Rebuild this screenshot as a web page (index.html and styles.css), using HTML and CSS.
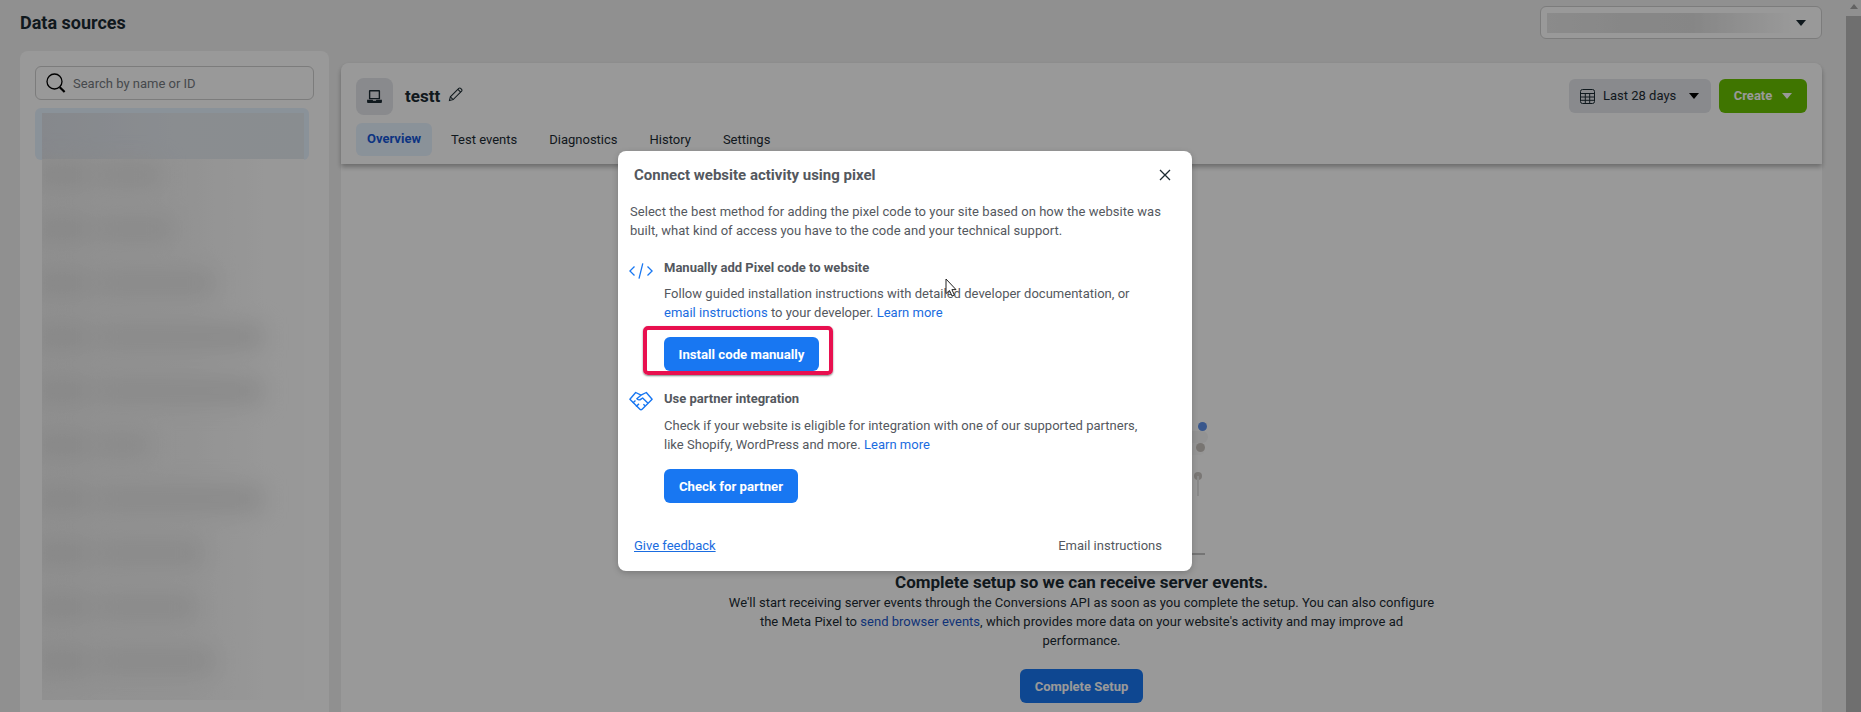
FILE: index.html
```html
<!DOCTYPE html>
<html lang="en">
<head>
<meta charset="utf-8">
<title>Data sources</title>
<link rel="stylesheet" href="styles.css">
</head>
<body>
<div class="app">
  <div class="content">
    <header class="topbar">
      <h1 class="page-title">Data sources</h1>
      <div class="account-select">
        <span class="account-redact"></span>
        <span class="caret caret-dark"></span>
      </div>
    </header>
    <div class="columns">
      <aside class="side-panel">
        <label class="search">
          <svg class="search-icon" viewBox="0 0 20 20" fill="none" stroke="#000" stroke-width="1.300"><circle cx="8.500" cy="8.500" r="7.500"/><path d="M13.800 14.200l4.800 4.800" stroke-width="2.200"/></svg>
          <span class="search-placeholder">Search by name or ID</span>
        </label>
        <div class="selected-item"></div>
        <div class="redact">
          <div class="redact-bars">
            <div class="redact-row r1"><i></i><b></b></div>
            <div class="redact-row r2"><i></i><b></b></div>
            <div class="redact-row r3"><i></i><b></b></div>
            <div class="redact-row r4"><i></i><b></b></div>
            <div class="redact-row r5"><i></i><b></b></div>
            <div class="redact-row r6"><i></i><b></b></div>
            <div class="redact-row r7"><i></i><b></b></div>
            <div class="redact-row r8"><i></i><b></b></div>
            <div class="redact-row r9"><i></i><b></b></div>
            <div class="redact-row r10"><i></i><b></b></div>
          </div>
        </div>
      </aside>
      <main class="main-panel">
        <section class="source-header">
          <div class="source-top">
            <div class="source-id">
              <span class="source-icon">
                <svg viewBox="0 0 16 14" width="15" height="13"><path fill="#1c2b33" fill-rule="evenodd" d="M3 0h10a1 1 0 0 1 1 1v9H2V1a1 1 0 0 1 1-1zm.5 1.500v7h9v-7z"/><path fill="#1c2b33" d="M0 10.500h6l.5 1h3l.5-1h6V13a1 1 0 0 1-1 1H1a1 1 0 0 1-1-1z"/></svg>
              </span>
              <span class="source-name">testt</span>
              <svg class="pencil" viewBox="0 0 16 16" fill="none" stroke="#1c2b33" stroke-width="1.100"><path d="M1.500 14.500l1-4L11.500 1.500a1.400 1.400 0 0 1 2 0l1 1a1.400 1.400 0 0 1 0 2l-9 9z"/><path d="M2.500 10.500l3 3M10.500 2.500l3 3"/></svg>
            </div>
            <div class="source-actions">
              <button class="btn-date">
                <svg class="calendar" viewBox="0 0 15 15" fill="none" stroke="#1c2b33" stroke-width="1"><rect x=".5" y=".5" width="14" height="14" rx="2"/><path d="M.5 4.500h14M.5 8h14M.5 11.300h14M5.300 4.500v10M9.700 4.500v10"/></svg>
                <span class="date-label">Last 28 days</span>
                <span class="caret caret-black"></span>
              </button>
              <button class="btn-create">Create<span class="caret caret-white"></span></button>
            </div>
          </div>
          <nav class="tabs">
            <a class="tab tab-active">Overview</a>
            <a class="tab">Test events</a>
            <a class="tab">Diagnostics</a>
            <a class="tab">History</a>
            <a class="tab">Settings</a>
          </nav>
        </section>
        <section class="setup">
          <div class="illustration">
            <span class="ill-track t1"></span>
            <span class="ill-track t2"></span>
            <span class="ill-dot d1"></span>
            <span class="ill-dot d2"></span>
            <span class="ill-dot d3"></span>
            <span class="ill-stem"></span>
            <span class="ill-base"></span>
          </div>
          <h2 class="setup-title">Complete setup so we can receive server events.</h2>
          <p class="setup-text">We'll start receiving server events through the Conversions API as soon as you complete the setup. You can also configure the Meta Pixel to <a class="setup-link">send browser events</a>, which provides more data on your website's activity and may improve ad performance.</p>
          <button class="btn-setup">Complete Setup</button>
        </section>
      </main>
    </div>
  </div>
  <div class="scrollbar">
    <span class="scroll-arrow"></span>
    <span class="scroll-thumb"></span>
  </div>
</div>

<div class="overlay"></div>

<div class="modal">
  <div class="modal-head">
    <h3 class="modal-title">Connect website activity using pixel</h3>
    <svg class="close" viewBox="0 0 12 12" fill="none" stroke="#1c2b33" stroke-width="1.300"><path d="M1 1l10 10M11 1L1 11"/></svg>
  </div>
  <div class="modal-body">
    <p class="intro">Select the best method for adding the pixel code to your site based on how the website was built, what kind of access you have to the code and your technical support.</p>
    <div class="option option-code">
      <svg class="option-icon" viewBox="0 0 24 16" fill="none" stroke="#1877f2" stroke-width="1.300"><path d="M5.500 3.500L.9 8l4.600 4.500M18.500 3.500L23.100 8l-4.600 4.500M13.800.4L10 15.600"/></svg>
      <div class="option-main">
        <h4 class="option-title">Manually add Pixel code to website</h4>
        <p class="option-text">Follow guided installation instructions with detailed developer documentation, or <a class="link">email instructions</a> to your developer. <a class="link">Learn more</a></p>
        <div class="highlight-wrap">
          <button class="btn-primary btn-install">Install code manually</button>
          <span class="highlight"></span>
        </div>
      </div>
    </div>
    <div class="option option-partner">
      <svg class="option-icon icon-hand" viewBox="0 0 24 20" fill="none" stroke="#1877f2" stroke-width="1.400" stroke-linejoin="round"><path d="M.9 8.300L6.700 1.500l5.300 2.700 5.300-2.700 5.800 6.800-10 10a1.500 1.500 0 0 1-2.200 0z"/><path d="M12 4.200L7.800 7.700c1 1.500 2.900 1.500 4.200.4l1.600-1.100 5.200 5.100M3.800 12l2.700-2.500M7 15.500l3-2.600M16 14.700l-1.600-1.500"/></svg>
      <div class="option-main">
        <h4 class="option-title">Use partner integration</h4>
        <p class="option-text">Check if your website is eligible for integration with one of our supported partners, like Shopify, WordPress and more. <a class="link">Learn more</a></p>
        <button class="btn-primary btn-partner">Check for partner</button>
      </div>
    </div>
  </div>
  <div class="modal-foot">
    <a class="feedback">Give feedback</a>
    <a class="email">Email instructions</a>
  </div>
</div>

<svg class="cursor" viewBox="0 0 13 19"><path d="M1 1v14.500l3.500-3 2.500 5.500 2.400-1-2.500-5.400H11z" fill="#fff" stroke="#222" stroke-width="1"/></svg>
</body>
</html>
```

FILE: styles.css
```css
* { box-sizing: border-box; }
html, body { margin: 0; height: 712px; overflow: hidden; }
body { font-family: Roboto, "Liberation Sans", sans-serif; background: #f1f1f1; color: #1c2b33; position: relative; }
h1, h2, h3, h4, p { margin: 0; }
button { font-family: inherit; border: 0; cursor: pointer; }

.app { display: flex; height: 712px; overflow: hidden; }
.content { flex: 1; min-width: 0; }

.topbar { display: flex; justify-content: space-between; align-items: flex-start; padding: 6px 24px 0 20px; height: 39px; }
.page-title { font-size: 18px; font-weight: 700; line-height: 22px; margin-top: 6px; color: #1c2b33; }
.account-select { width: 282px; height: 33px; border: 1px solid #cfcfcf; border-radius: 6px; background: #fff; display: flex; align-items: center; justify-content: space-between; padding: 0 15px 0 6px; }
.account-redact { width: 244px; height: 20px; background: linear-gradient(90deg, #e8e8e8, #e2e2e2 30%, #e0e0e0 60%, #fff 100%); }
.caret { display: inline-block; width: 0; height: 0; border-left: 5px solid transparent; border-right: 5px solid transparent; border-top: 6px solid #1c2b33; flex: none; }
.caret-black { border-top-color: #000; }
.caret-white { border-top-color: #fff; margin-left: 10px; }

.columns { display: flex; gap: 12px; padding: 0 24px 0 20px; align-items: flex-start; }

.side-panel { position: relative; width: 309px; height: 661px; margin-top: 12px; background: #fff; border-radius: 8px 8px 0 0; padding: 15px 15px 0; }
.search { display: flex; align-items: center; gap: 7px; width: 279px; height: 34px; padding: 0 10px; border: 1px solid #cfcfcf; border-radius: 6px; }
.search-icon { width: 20px; height: 20px; flex: none; }
.search-placeholder { font-size: 13px; color: #757a80; }
.selected-item { width: 274px; height: 52px; margin-top: 8px; background: #e7f3ff; border-radius: 6px; }

.redact { position: absolute; left: 22px; top: 62px; width: 262px; height: 587px; overflow: hidden; background: linear-gradient(90deg, #f1f1f1, #f5f5f5 55%, #fdfdfd 85%); }
.redact::before { content: ""; position: absolute; left: 0; top: 0; width: 100%; height: 46px; background: linear-gradient(90deg, #dfe3ea, #e6ebf1 50%, #e5ebf1); }
.redact-bars { position: relative; filter: blur(11px); padding-top: 35px; display: flex; flex-direction: column; }
.redact-row { display: flex; gap: 8px; height: 54px; align-items: center; }
.redact-row i { width: 52px; height: 30px; background: #e3e3e3; margin-left: -6px; flex: none; }
.redact-row b { height: 26px; background: #e6e6e6; }
.r1 b { width: 65px; } .r2 b { width: 77px; } .r3 b { width: 118px; } .r4 b { width: 166px; } .r5 b { width: 166px; }
.r6 b { width: 53px; } .r7 b { width: 166px; } .r8 b { width: 106px; } .r9 b { width: 100px; } .r10 b { width: 118px; }

.main-panel { flex: 1; min-width: 0; height: 649px; margin-top: 24px; background: #fff; border-radius: 8px 8px 0 0; }
.source-header { position: relative; height: 101px; padding: 15px 15px 0; border-radius: 8px 8px 0 0; box-shadow: 0 3px 5px rgba(0,0,0,.3); background: #fff; }
.source-top { display: flex; justify-content: space-between; align-items: flex-start; height: 45px; }
.source-id { display: flex; align-items: center; height: 37px; }
.source-icon { width: 37px; height: 37px; border-radius: 8px; background: #e4e6eb; display: flex; align-items: center; justify-content: center; }
.source-name { font-size: 17px; font-weight: 700; margin-left: 12px; margin-bottom: 1px; }
.pencil { width: 15px; height: 15px; margin-left: 8px; margin-top: -4px; }
.source-actions { display: flex; gap: 8px; padding-top: 1px; }
.btn-date { width: 142px; height: 34px; background: #e4e6eb; border-radius: 6px; display: flex; align-items: center; padding: 0 11px; font-size: 13px; color: #1c2b33; }
.calendar { width: 15px; height: 15px; margin-right: 8px; flex: none; }
.date-label { white-space: nowrap; margin-bottom: 2px; }
.btn-date .caret { margin-left: 13px; }
.btn-create { width: 88px; height: 34px; padding-bottom: 2px; background: #69c400; color: #fff; border-radius: 6px; font-size: 13px; font-weight: 700; display: flex; align-items: center; justify-content: center; }

.tabs { display: flex; gap: 3px; }
.tab { height: 33px; line-height: 33px; padding: 0 11px; font-size: 13px; border-radius: 6px; color: #1c2b33; margin-right: 7px; }
.tab-active { background: #e7f3ff; color: #1658d8; font-weight: 700; margin-right: 5px; line-height: 32px; }

.setup { text-align: center; }
.illustration { position: relative; height: 411px; }
.ill-track { position: absolute; background: #f5f5f5; border-radius: 6px; }
.t1 { left: 720px; width: 147px; top: 267px; height: 12px; }
.t2 { left: 720px; width: 144px; top: 279px; height: 12px; background: #fafafa; }
.ill-dot { position: absolute; border-radius: 50%; }
.d1 { width: 9px; height: 9px; left: 857px; top: 258px; background: #5f92ea; }
.d2 { width: 9px; height: 9px; left: 855px; top: 279px; background: #c9c4bf; }
.d3 { width: 8px; height: 8px; left: 853px; top: 308px; background: #cbc7c3; }
.ill-stem { position: absolute; width: 2px; height: 20px; left: 856px; top: 312px; background: #e4e4e4; }
.ill-base { position: absolute; height: 2px; left: 700px; width: 164px; top: 389px; background: #c4c4c4; }
.setup-title { font-size: 17px; font-weight: 700; line-height: 19px; margin-top: -2px; }
.setup-text { width: 720px; margin: 1px auto 0; font-size: 13px; letter-spacing: .02px; line-height: 19px; }
.setup-link { color: #1a55c8; }
.btn-setup { display: block; margin: 19px auto 0; width: 123px; height: 34px; background: #1877f2; color: #fff; border-radius: 6px; font-size: 13px; font-weight: 700; }

.scrollbar { width: 15px; flex: none; background: #f1f1f1; display: flex; flex-direction: column; align-items: center; }
.scroll-arrow { width: 0; height: 0; margin: 4px 0 4px; border-left: 4.500px solid transparent; border-right: 4.500px solid transparent; border-bottom: 5px solid #a3a3a3; flex: none; }
.scroll-thumb { width: 15px; flex: 1; margin-top: 3px; background: #b9b9b9; }

.overlay { position: absolute; inset: 0; background: rgba(0,0,0,.4); }

.modal { position: absolute; left: 618px; top: 151px; width: 574px; height: 420px; background: #fff; border-radius: 8px; color: #54585e; box-shadow: 0 2px 6px rgba(0,0,0,.2); }
.modal-head { display: flex; align-items: center; justify-content: space-between; height: 48px; padding: 0 21px 0 16px; }
.modal-title { font-size: 15px; font-weight: 700; color: #54585e; }
.close { width: 12px; height: 12px; }
.modal-body { padding: 3px 12px 0 12px; }
.intro { font-size: 13px; letter-spacing: .05px; line-height: 19px; width: 540px; }
.option { display: flex; gap: 11px; }
.option-code { margin-top: 18px; }
.option-partner { margin-top: 18px; }
.option-icon { width: 24px; height: 16px; flex: none; margin-top: 5px; margin-left: -1px; }
.icon-hand { height: 20px; margin-top: 2px; }
.option-main { flex: 1; min-width: 0; }
.option-title { font-size: 13px; font-weight: 700; line-height: 19px; }
.option-text { font-size: 13px; letter-spacing: .02px; line-height: 18.500px; margin-top: 8px; width: 482px; }
.option-partner .option-text { margin-top: 9px; }
.link { color: #1a6ce0; }
.highlight-wrap { position: relative; width: max-content; margin-top: 15px; }
.btn-primary { display: block; height: 34px; background: #1877f2; color: #fff; border-radius: 6px; font-size: 13.200px; font-weight: 700; }
.btn-install { width: 155px; }
.btn-partner { width: 134px; margin-top: 15px; }
.highlight { position: absolute; left: -21px; top: -11px; width: 190px; height: 49px; border: 4px solid #e8104f; border-radius: 5px; box-shadow: 0 1px 2px rgba(0,0,0,.5); }
.modal-foot { position: absolute; left: 16px; right: 30px; top: 386px; display: flex; justify-content: space-between; font-size: 13px; line-height: 18px; }
.feedback { color: #1a6ce0; text-decoration: underline; }
.email { color: #54585e; }

.cursor { position: absolute; left: 945px; top: 278px; width: 13px; height: 19px; }
```
